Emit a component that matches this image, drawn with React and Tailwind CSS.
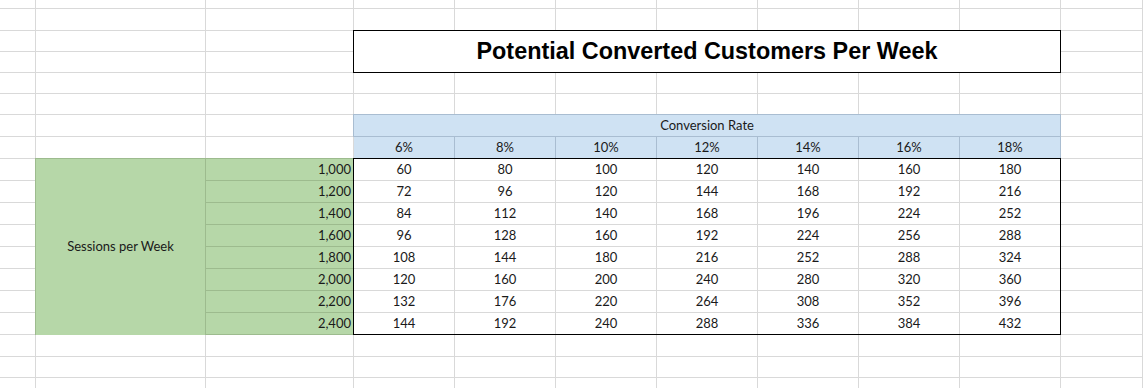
import React from 'react';

const RATES = [6, 8, 10, 12, 14, 16, 18];
const SESSIONS = [1000, 1200, 1400, 1600, 1800, 2000, 2200, 2400];

const ROW_COUNT = 19;
const COL_COUNT = 11;

const App = () => {
  return (
    <div className="w-[1143px] h-[388px] overflow-hidden bg-white font-['Lato',sans-serif] text-[13px] text-[#1a1a1a]">
      <div className="grid">
        {/* Sheet gridlines */}
        <div className="col-start-1 row-start-1 grid grid-cols-[36px_170px_148px_repeat(7,101px)_1fr] grid-rows-[9px_22px_21px_21px_21px_21px_22px_22px_repeat(8,22px)_22px_21px_22px]">
          {Array.from({ length: ROW_COUNT * COL_COUNT }).map((_, i) => (
            <div key={i} className="border-r border-b border-[#d9d9d9]" />
          ))}
        </div>

        {/* Content */}
        <div className="col-start-1 row-start-1 grid grid-cols-[36px_170px_148px_repeat(7,101px)_1fr] grid-rows-[9px_22px_21px_21px_21px_21px_22px_22px_repeat(8,22px)_22px_21px_22px]">
          {/* Title */}
          <div className="col-start-4 col-span-7 row-start-3 row-span-2 -ml-px -mt-px border border-black bg-white flex items-center justify-center pt-px font-['Liberation_Sans',Arial,sans-serif] font-bold text-[23.4px] text-black">
            Potential Converted Customers Per Week
          </div>

          {/* Conversion Rate header */}
          <div className="col-start-4 col-span-7 row-start-7 -ml-px -mt-px border border-[#a9bdd1] bg-[#cfe2f3] flex items-center justify-center">
            Conversion Rate
          </div>

          {/* Rates */}
          <div className="col-start-4 col-span-7 row-start-8 grid grid-cols-[repeat(7,101px)]">
            {RATES.map((r) => (
              <div key={r} className="bg-[#cfe2f3] border-r border-[#a9bdd1] flex items-center justify-center">
                {r}%
              </div>
            ))}
          </div>

          {/* Sessions block */}
          <div className="col-start-2 col-span-2 row-start-9 row-span-8 -ml-px -mt-px border-l border-t border-[#9dbb8e] bg-[#b6d7a8] grid grid-cols-[170px_148px] grid-rows-[repeat(8,22px)]">
            <div className="row-span-8 border-r border-[#9dbb8e] flex items-center justify-center">
              Sessions per Week
            </div>
            {SESSIONS.map((s) => (
              <div key={s} className="border-b border-[#9dbb8e] flex items-center justify-end pr-[3px]">
                {s.toLocaleString('en-US')}
              </div>
            ))}
          </div>

          {/* Results block */}
          <div className="col-start-4 col-span-7 row-start-9 row-span-8 -ml-px -mt-px border border-black bg-white grid grid-cols-[repeat(6,101px)_100px] grid-rows-[repeat(7,22px)_21px]">
            {SESSIONS.map((s, ri) =>
              RATES.map((r, ci) => (
                <div
                  key={`${s}-${r}`}
                  className={`flex items-center justify-center border-[#d9d9d9] ${ci < 6 ? 'border-r' : ''} ${ri < 7 ? 'border-b' : ''}`}
                >
                  {Math.round((s * r) / 100)}
                </div>
              ))
            )}
          </div>
        </div>
      </div>
    </div>
  );
};

export default App;
